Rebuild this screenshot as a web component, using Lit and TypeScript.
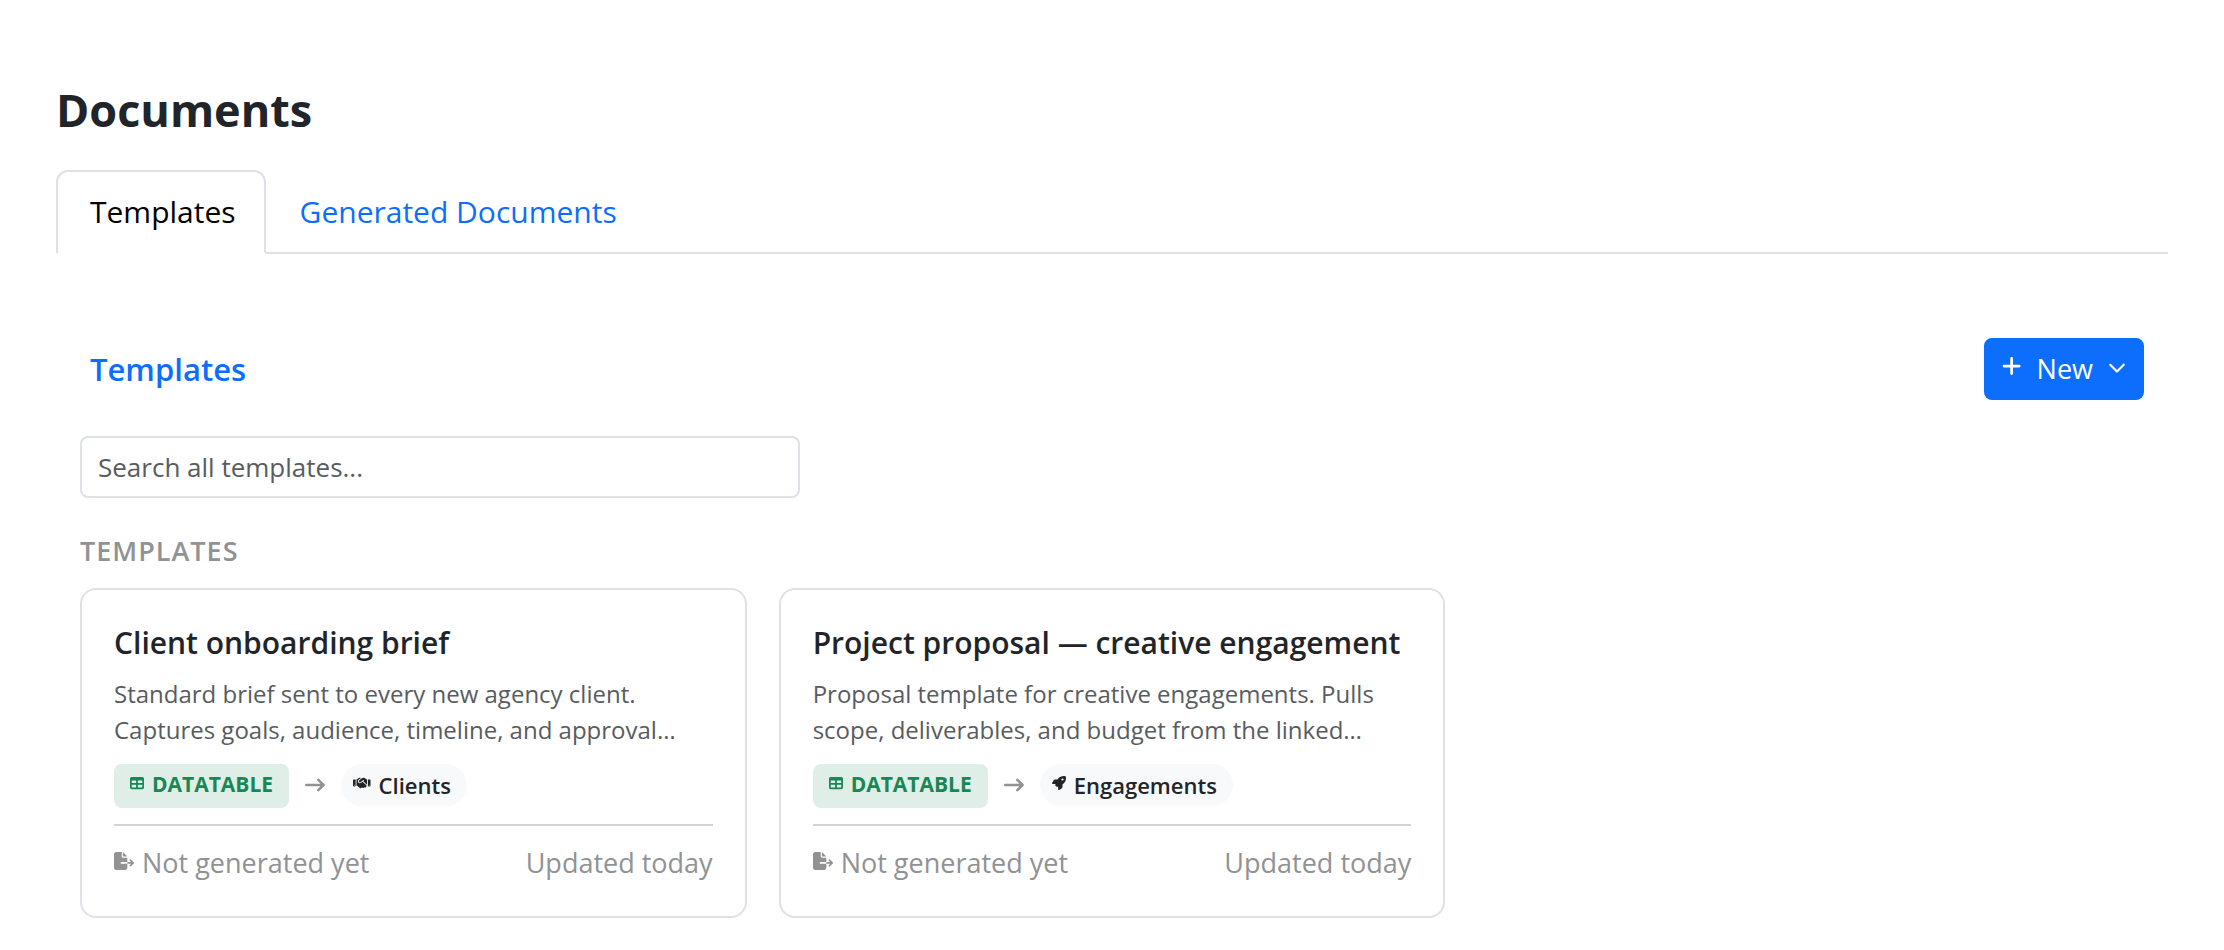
import { LitElement, html, css, svg } from "lit";
import { customElement, property, state } from "lit/decorators.js";

interface Template {
  title: string;
  description: string;
  source: string;
  target: string;
  icon: "handshake" | "rocket";
}

const icons = {
  plus: svg`<path d="M256 80c0-17.7-14.3-32-32-32s-32 14.3-32 32V224H48c-17.7 0-32 14.3-32 32s14.3 32 32 32H192V432c0 17.7 14.3 32 32 32s32-14.3 32-32V288H400c17.7 0 32-14.3 32-32s-14.3-32-32-32H256V80z"/>`,
  chevron: svg`<path d="M233.4 406.6c12.5 12.5 32.8 12.5 45.3 0l192-192c12.5-12.5 12.5-32.8 0-45.3s-32.8-12.5-45.3 0L256 338.7 86.6 169.4c-12.5-12.5-32.8-12.5-45.3 0s-12.5 32.8 0 45.3l192 192z"/>`,
  fileExport: svg`<path d="M0 64C0 28.7 28.7 0 64 0H224V128c0 17.7 14.3 32 32 32H384V288H216c-13.3 0-24 10.7-24 24s10.7 24 24 24H384V448c0 35.3-28.7 64-64 64H64c-35.3 0-64-28.7-64-64V64zM384 336V288H494.1l-39-39c-9.4-9.4-9.4-24.6 0-33.9s24.6-9.4 33.9 0l80 80c9.4 9.4 9.4 24.6 0 33.9l-80 80c-9.4 9.4-24.6 9.4-33.9 0s-9.4-24.6 0-33.9l39-39H384zm0-208H256V0L384 128z"/>`,
  table: svg`<path d="M64 256V160H224v96H64zm0 64H224v96H64V320zm224 96V320H448v96H288zM448 256H288V160H448v96zM64 32C28.7 32 0 60.7 0 96V416c0 35.3 28.7 64 64 64H448c35.3 0 64-28.7 64-64V96c0-35.3-28.7-64-64-64H64z"/>`,
  rocket: svg`<path d="M156.6 384.9L125.7 354c-8.5-8.5-11.5-20.8-7.7-32.2c3-8.9 7-20.5 11.8-33.8L24 288c-8.6 0-16.6-4.6-20.9-12.1s-4.2-16.7 .2-24.1l52.5-88.5c13-21.9 36.5-35.3 61.9-35.3l82.3 0c2.4-4 4.8-7.7 7.2-11.3C289.1-4.1 411.1-8.1 483.9 5.3c11.6 2.1 20.6 11.2 22.8 22.8c13.4 72.9 9.3 194.8-111.4 276.7c-3.5 2.4-7.3 4.8-11.3 7.2v82.3c0 25.4-13.4 49-35.3 61.9l-88.5 52.5c-7.4 4.4-16.6 4.5-24.1 .2s-12.1-12.2-12.1-20.9V380.8c-14.1 4.9-26.4 8.9-35.7 11.9c-11.2 3.6-23.4 .5-31.8-7.8zM384 168a40 40 0 1 0 0-80 40 40 0 1 0 0 80z"/>`,
  handshake: svg`<path d="M323.4 85.2l-96.8 78.4c-16.1 13-19.2 36.4-7 53.1c12.9 17.8 38 21.3 55.3 7.8l99.3-77.2c7-5.4 17-4.2 22.5 2.8s4.2 17-2.8 22.5l-20.9 16.2L512 316.8V128h-.7l-3.9-2.5L434.8 79c-15.3-9.8-33.2-15-51.4-15c-21.8 0-43 7.5-60 21.2zm22.8 124.4l-51.7 40.2C263 274.3 217.3 268 193.7 235.6c-22.2-30.5-16.6-73.1 12.7-96.8l83.2-67.3c-11.6-4.9-24.1-7.4-36.8-7.4C234 64 215.7 69.6 200 80l-72 48V352h28.2l91.4 83.4c19.6 17.9 49.9 16.5 67.8-3.1c5.5-6.1 9.2-13.2 11.1-20.6l17 15.6c19.5 17.9 49.9 16.6 67.8-2.9c4.5-4.9 7.8-10.6 9.9-16.5c19.4 13 45.8 10.3 62.1-7.5c17.9-19.5 16.6-49.9-2.9-67.8l-134.2-123zM16 128c-8.8 0-16 7.2-16 16V352c0 17.7 14.3 32 32 32H64c17.7 0 32-14.3 32-32V128H16zM48 320a16 16 0 1 1 0 32 16 16 0 1 1 0-32zM544 128V352c0 17.7 14.3 32 32 32h32c17.7 0 32-14.3 32-32V144c0-8.8-7.2-16-16-16H544zm32 208a16 16 0 1 1 32 0 16 16 0 1 1-32 0z"/>`,
};

@customElement("template-card")
export class TemplateCard extends LitElement {
  @property({ attribute: false }) template!: Template;

  static styles = css`
    :host {
      display: block;
      min-width: 0;
    }
    .card {
      border: 2px solid #dee2e6;
      border-radius: 16px;
      padding: 32px;
      background: #fff;
    }
    .title {
      margin: 0 0 12px;
      font-size: 30px;
      font-weight: 600;
      line-height: 42px;
      white-space: nowrap;
      overflow: hidden;
      text-overflow: ellipsis;
    }
    .description {
      margin: 0 0 16px;
      font-size: 24px;
      line-height: 36px;
      color: #585c5f;
    }
    .meta {
      display: flex;
      align-items: flex-start;
      gap: 16px;
      padding-bottom: 16px;
      border-bottom: 2px solid #d3d3d4;
    }
    .badge {
      display: flex;
      gap: 8px;
      padding: 4px 16px 8px;
      border-radius: 8px;
      background: #dfeee7;
      color: #198754;
      font-size: 21px;
      font-weight: 700;
      line-height: 32px;
    }
    .table-icon {
      width: 14px;
      height: 14px;
      margin-top: 8px;
      fill: currentColor;
    }
    .arrow {
      width: 20px;
      height: 14px;
      margin-top: 14px;
      fill: none;
      stroke: #909294;
      stroke-width: 2.5;
      stroke-linecap: round;
      stroke-linejoin: round;
    }
    .pill {
      display: flex;
      gap: 8px;
      padding: 0 16px 0 12px;
      border-radius: 21px;
      background: #f8f9fa;
      font-size: 22px;
      font-weight: 600;
      line-height: 42px;
    }
    .pill-icon {
      height: 14px;
      margin-top: 12px;
      fill: currentColor;
    }
    .footer {
      display: flex;
      justify-content: space-between;
      padding-top: 16px;
      font-size: 27px;
      line-height: 42px;
      color: #909294;
    }
    .status {
      display: flex;
      gap: 8px;
    }
    .file-icon {
      width: 20px;
      height: 18px;
      margin-top: 10px;
      fill: currentColor;
    }
  `;

  render() {
    const t = this.template;
    const box = t.icon === "handshake" ? "0 0 640 512" : "0 0 512 512";
    return html`
      <article class="card">
        <h3 class="title">${t.title}</h3>
        <p class="description">${t.description}</p>
        <div class="meta">
          <span class="badge">
            <svg class="table-icon" viewBox="0 0 512 512" aria-hidden="true">${icons.table}</svg>
            <span>${t.source}</span>
          </span>
          <svg class="arrow" viewBox="0 0 20 14" aria-hidden="true"><path d="M1.3 7H18.5M13.3 1.8L18.6 7L13.3 12.2"/></svg>
          <span class="pill">
            <svg class="pill-icon" viewBox=${box} aria-hidden="true">${icons[t.icon]}</svg>
            <span>${t.target}</span>
          </span>
        </div>
        <div class="footer">
          <span class="status">
            <svg class="file-icon" viewBox="0 0 576 512" aria-hidden="true">${icons.fileExport}</svg>
            <span>Not generated yet</span>
          </span>
          <span>Updated today</span>
        </div>
      </article>
    `;
  }
}

@customElement("app-root")
export class AppRoot extends LitElement {
  @state() private tab = "Templates";

  private templates: Template[] = [
    {
      title: "Client onboarding brief",
      description: "Standard brief sent to every new agency client. Captures goals, audience, timeline, and approval…",
      source: "DATATABLE",
      target: "Clients",
      icon: "handshake",
    },
    {
      title: "Project proposal — creative engagement",
      description: "Proposal template for creative engagements. Pulls scope, deliverables, and budget from the linked…",
      source: "DATATABLE",
      target: "Engagements",
      icon: "rocket",
    },
  ];

  static styles = css`
    :host {
      display: block;
      box-sizing: border-box;
      min-height: 100vh;
      padding: 80px 56px 32px;
      background: #fff;
      color: #212529;
      font-family: "Open Sans", "Noto Sans", sans-serif;
    }
    .page-title {
      margin: 0 0 30px;
      font-size: 45px;
      font-weight: 700;
      line-height: 60px;
    }
    .tabs {
      display: flex;
      box-shadow: inset 0 -2px #dee2e6;
    }
    .tab {
      padding: 16px 28px 16px 32px;
      border: 2px solid transparent;
      border-radius: 12px 12px 0 0;
      background: none;
      color: #0d6efd;
      font: inherit;
      font-size: 30px;
      line-height: 48px;
      cursor: pointer;
    }
    .tab.active {
      border-color: #dee2e6;
      border-bottom-color: #fff;
      background: #fff;
      color: #000;
    }
    .panel {
      padding: 84px 24px 0;
    }
    .toolbar {
      display: flex;
      align-items: center;
      justify-content: space-between;
      margin-bottom: 36px;
      padding-left: 10px;
    }
    .crumb {
      font-size: 31px;
      font-weight: 600;
      line-height: 48px;
      color: #0d6efd;
      text-decoration: none;
    }
    .new {
      display: flex;
      align-items: center;
      gap: 15px;
      padding: 8px 16px;
      border: 2px solid #0d6efd;
      border-radius: 8px;
      background: #0d6efd;
      color: #fff;
      font: inherit;
      font-size: 27px;
      line-height: 42px;
      cursor: pointer;
    }
    .plus-icon {
      height: 22px;
      margin-bottom: 6px;
      fill: currentColor;
    }
    .chevron-icon {
      height: 18px;
      margin-bottom: 4px;
      fill: currentColor;
    }
    .search {
      display: block;
      box-sizing: border-box;
      width: 100%;
      max-width: 720px;
      height: 62px;
      margin-bottom: 32px;
      padding: 8px 16px;
      border: 2px solid #dee2e6;
      border-radius: 8px;
      background: #fff;
      color: #212529;
      font: inherit;
      font-size: 26px;
      line-height: 42px;
    }
    .search::placeholder {
      color: #585c5f;
      opacity: 1;
    }
    .section {
      margin: 0 0 16px;
      font-size: 27px;
      font-weight: 600;
      line-height: 42px;
      letter-spacing: 1px;
      color: #909294;
    }
    .grid {
      display: grid;
      grid-template-columns: repeat(3, minmax(0, 1fr));
      gap: 32px;
    }
  `;

  private renderTab(name: string) {
    const active = this.tab === name;
    return html`<button
      class="tab ${active ? "active" : ""}"
      role="tab"
      aria-selected=${active ? "true" : "false"}
      @click=${() => (this.tab = name)}
    >${name}</button>`;
  }

  render() {
    return html`
      <h1 class="page-title">Documents</h1>
      <div class="tabs" role="tablist">
        ${this.renderTab("Templates")} ${this.renderTab("Generated Documents")}
      </div>
      <main class="panel">
        <div class="toolbar">
          <a class="crumb" href="#templates">Templates</a>
          <button class="new" aria-haspopup="menu">
            <svg class="plus-icon" viewBox="0 0 448 512" aria-hidden="true">${icons.plus}</svg>
            <span>New</span>
            <svg class="chevron-icon" viewBox="0 0 512 512" aria-hidden="true">${icons.chevron}</svg>
          </button>
        </div>
        <input class="search" type="search" placeholder="Search all templates..." aria-label="Search all templates" />
        <h2 class="section">TEMPLATES</h2>
        <div class="grid">
          ${this.templates.map((t) => html`<template-card .template=${t}></template-card>`)}
        </div>
      </main>
    `;
  }
}
